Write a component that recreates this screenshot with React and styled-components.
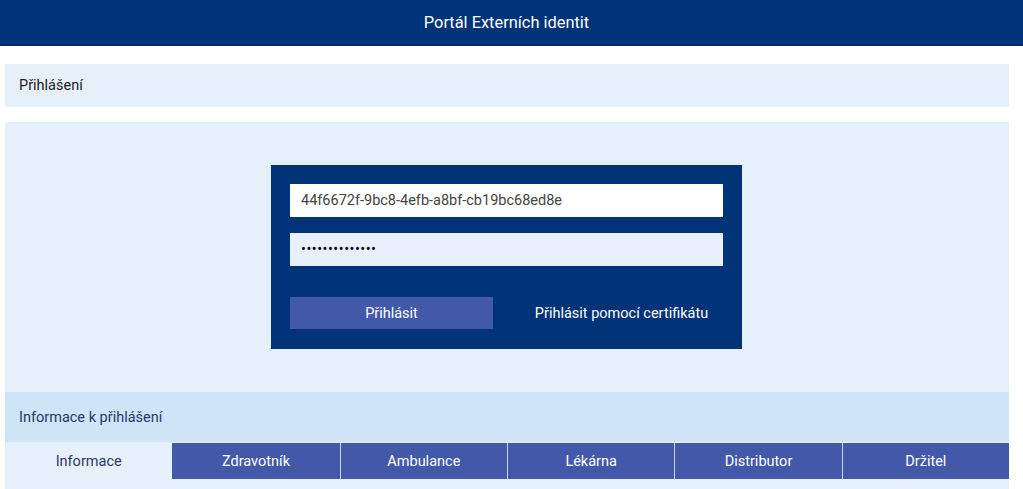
import React from "react";
import styled, { createGlobalStyle } from "styled-components";

const Global = createGlobalStyle`
  html, body { margin: 0; padding: 0; background: #fff; }
  body { font-family: Roboto, "Noto Sans", Arial, sans-serif; font-size: 14.5px; }
  * { box-sizing: border-box; }
`;

const Header = styled.header`
  height: 46px;
  background: #003378;
  border-bottom: 2px solid #002a66;
  color: #fff;
  display: flex;
  align-items: center;
  justify-content: center;
  padding-right: 10px;
  font-size: 16.4px;
`;

const Content = styled.main`
  padding: 18px 14px 0 5px;
  display: flex;
  flex-direction: column;
  gap: 15px;
`;

const TitleBar = styled.div`
  height: 43px;
  background: #e6f0fb;
  color: #1c1c1c;
  display: flex;
  align-items: center;
  padding-left: 14px;
`;

const Panel = styled.section`
  background: #e6f0fb;
`;

const LoginWrap = styled.div`
  display: flex;
  justify-content: center;
  padding: 43px 1px 43px 0;
`;

const LoginBox = styled.form`
  width: 471px;
  background: #003378;
  padding: 19px 19px 20px;
  display: flex;
  flex-direction: column;
`;

const Input = styled.input`
  height: 33px;
  border: none;
  outline: none;
  padding: 0 11px;
  font-family: Roboto, sans-serif;
  font-size: 14.5px;
  color: ${(p) => (p.type === "password" ? "#000" : "#444")};
  background: ${(p) => (p.$filled ? "#e8f0fe" : "#fff")};
  margin-bottom: ${(p) => p.$mb || 0}px;
  caret-color: #000;
  letter-spacing: ${(p) => (p.type === "password" ? "0.5px" : "0")};
`;

const Buttons = styled.div`
  display: flex;
  justify-content: space-between;
  margin-top: 31px;
`;

const Button = styled.button`
  width: 203px;
  height: 32px;
  border: none;
  font-family: Roboto, sans-serif;
  font-size: 14.5px;
  color: #fff;
  background: ${(p) => (p.$primary ? "#4258a9" : "transparent")};
  cursor: pointer;
`;

const InfoHeader = styled.div`
  height: 51px;
  background: #d0e4f8;
  color: #2a3a66;
  display: flex;
  align-items: center;
  padding-left: 14px;
  border-bottom: 1px solid #e6f0fb;
`;

const Tabs = styled.div`
  display: grid;
  grid-template-columns: repeat(6, 1fr);
  padding-bottom: 10px;
`;

const Tab = styled.div`
  height: 36px;
  display: flex;
  align-items: center;
  justify-content: center;
  background: ${(p) => (p.$active ? "#e6f0fb" : "#4258a9")};
  color: ${(p) => (p.$active ? "#2a3a66" : "#fff")};
  border-left: ${(p) => (p.$active || p.$first ? "none" : "1px solid #c9d6ee")};
`;

const tabs = ["Informace", "Zdravotník", "Ambulance", "Lékárna", "Distributor", "Držitel"];

export default function App() {
  return (
    <>
      <Global />
      <Header>Portál Externích identit</Header>
      <Content>
        <TitleBar>Přihlášení</TitleBar>
        <Panel>
          <LoginWrap>
            <LoginBox onSubmit={(e) => e.preventDefault()}>
              <Input defaultValue="44f6672f-9bc8-4efb-a8bf-cb19bc68ed8e" $mb={16} />
              <Input type="password" defaultValue="12345678901234" $filled />
              <Buttons>
                <Button $primary type="submit">Přihlásit</Button>
                <Button type="button">Přihlásit pomocí certifikátu</Button>
              </Buttons>
            </LoginBox>
          </LoginWrap>
          <InfoHeader>Informace k přihlášení</InfoHeader>
          <Tabs>
            {tabs.map((t, i) => (
              <Tab key={t} $active={i === 0} $first={i === 1}>{t}</Tab>
            ))}
          </Tabs>
        </Panel>
      </Content>
    </>
  );
}
